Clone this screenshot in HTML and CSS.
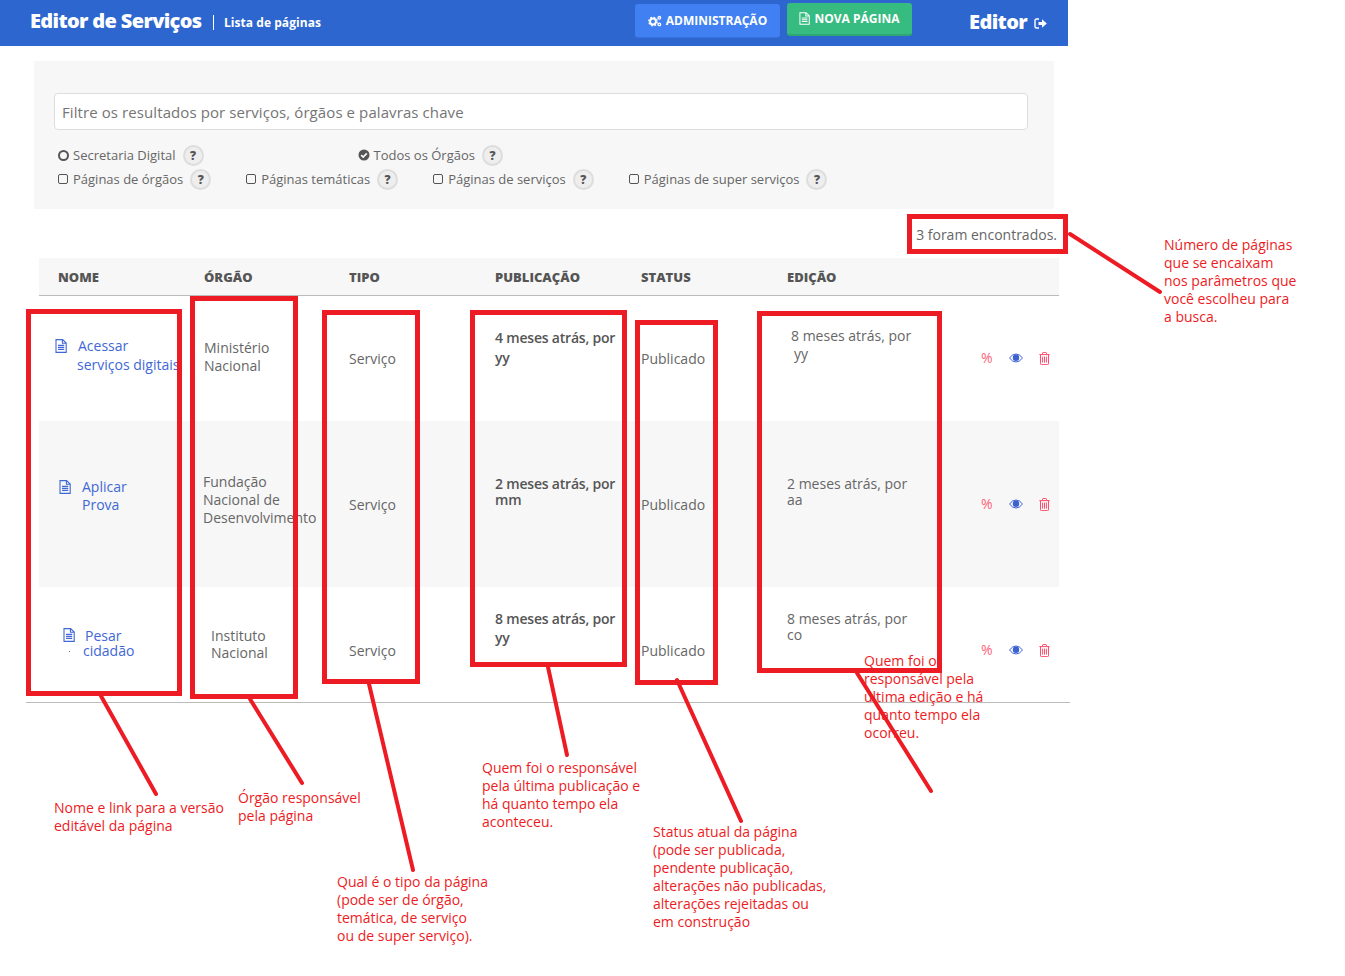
FILE: index.html
```html
<!DOCTYPE html>
<html lang="pt-BR">
<head>
<meta charset="utf-8">
<title>Editor de Serviços</title>
<link rel="stylesheet" href="styles.css">
</head>
<body>
<svg width="0" height="0" class="defs">
  <symbol id="doc" viewBox="0 0 12 14"><path d="M1 .6h6.6L11.2 4v9.4H1z M7.4.8V4.2h3.6 M3 6.4h6.2 M3 8.4h6.2 M3 10.4h6.2" fill="none" stroke="currentColor" stroke-width="1.1"/></symbol>
  <symbol id="trash" viewBox="0 0 11 13"><path d="M.3 2.6h10.4 M1.5 2.6v9.2q0 .8.8.8h6.4q.8 0 .8-.8V2.6 M3.5 2.6V1.2q0-.7.7-.7h2.6q.7 0 .7.7v1.4 M3.6 4.6v6 M5.5 4.6v6 M7.4 4.6v6" fill="none" stroke="currentColor" stroke-width="1"/></symbol>
  <symbol id="eye" viewBox="0 0 14 10"><path d="M.5 5Q3.4 1 7 1t6.500 4Q10.600 9 7 9T.5 5z" fill="none" stroke="currentColor" stroke-width="1"/><circle cx="7" cy="4.800" r="3.200" fill="currentColor"/></symbol>
</svg>

<header class="topbar">
  <h1 class="brand">Editor de Serviços</h1>
  <span class="sub">Lista de páginas</span>
  <a class="btn btn-admin">
    <svg class="ico-gear" viewBox="0 0 14 12"><circle cx="5" cy="6.500" r="2.900" fill="none" stroke="#fff" stroke-width="2"/><circle cx="5" cy="6.500" r="4.300" fill="none" stroke="#fff" stroke-width="1.200" stroke-dasharray="1.800 1.570"/><circle cx="11.300" cy="2.800" r="1.300" fill="none" stroke="#fff" stroke-width="1.300"/><circle cx="11.300" cy="9.400" r="1.300" fill="none" stroke="#fff" stroke-width="1.300"/></svg>
    ADMINISTRAÇÃO
  </a>
  <a class="btn btn-new">
    <svg class="ico-doc"><use href="#doc"/></svg>
    NOVA PÁGINA
  </a>
  <span class="user">Editor</span>
  <svg class="ico-out" viewBox="0 0 13 11"><path d="M5 1H2.500Q1 1 1 2.500v6Q1 10 2.500 10H5" fill="none" stroke="#fff" stroke-width="1.400"/><path d="M4.500 4h3.500V1.200L12.800 5.500 8 9.800V7H4.500z" fill="#fff"/></svg>
</header>

<main class="page">
  <section class="panel">
    <input class="search" type="text" placeholder="Filtre os resultados por serviços, órgãos e palavras chave">
    <div class="opts">
      <span class="opt"><i class="radio"></i>Secretaria Digital<b class="q">?</b></span>
      <span class="opt opt-all"><svg class="check" viewBox="0 0 12 12"><circle cx="6" cy="6" r="5.500" fill="#555"/><path d="M3.200 6.100l2 2 3.600-3.800" fill="none" stroke="#f7f7f7" stroke-width="1.700"/></svg>Todos os Órgãos<b class="q">?</b></span>
    </div>
    <div class="opts">
      <span class="opt"><i class="box"></i>Páginas de órgãos<b class="q">?</b></span>
      <span class="opt"><i class="box"></i>Páginas temáticas<b class="q">?</b></span>
      <span class="opt"><i class="box"></i>Páginas de serviços<b class="q">?</b></span>
      <span class="opt"><i class="box"></i>Páginas de super serviços<b class="q">?</b></span>
    </div>
  </section>

  <p class="found">3 foram encontrados.</p>

  <div class="table">
    <div class="row head">
      <div>NOME</div><div>ÓRGÃO</div><div>TIPO</div><div>PUBLICAÇÃO</div><div>STATUS</div><div>EDIÇÃO</div><div></div>
    </div>

    <div class="row r1">
      <div class="cell name"><svg class="ico-file"><use href="#doc"/></svg><a>Acessar<br><span class="name2">serviços digitais</span></a></div>
      <div class="cell org">Ministério<br>Nacional</div>
      <div class="cell type">Serviço</div>
      <div class="cell pub">4 meses atrás, por<br>yy</div>
      <div class="cell stat">Publicado</div>
      <div class="cell edit">8 meses atrás, por<br><span class="edit2">yy</span></div>
      <div class="cell acts"><span class="pct">%</span><svg class="ico-eye"><use href="#eye"/></svg><svg class="ico-trash"><use href="#trash"/></svg></div>
    </div>

    <div class="row r2">
      <div class="cell name"><svg class="ico-file"><use href="#doc"/></svg><a>Aplicar<br>Prova</a></div>
      <div class="cell org">Fundação<br>Nacional de<br>Desenvolvimento</div>
      <div class="cell type">Serviço</div>
      <div class="cell pub">2 meses atrás, por<br>mm</div>
      <div class="cell stat">Publicado</div>
      <div class="cell edit">2 meses atrás, por<br>aa</div>
      <div class="cell acts"><span class="pct">%</span><svg class="ico-eye"><use href="#eye"/></svg><svg class="ico-trash"><use href="#trash"/></svg></div>
    </div>

    <div class="row r3">
      <div class="cell name"><svg class="ico-file"><use href="#doc"/></svg><a>Pesar<br><span class="name2">cidadão</span></a></div>
      <div class="cell org">Instituto<br>Nacional</div>
      <div class="cell type">Serviço</div>
      <div class="cell pub">8 meses atrás, por<br>yy</div>
      <div class="cell stat">Publicado</div>
      <div class="cell edit">8 meses atrás, por<br>co</div>
      <div class="cell acts"><span class="pct">%</span><svg class="ico-eye"><use href="#eye"/></svg><svg class="ico-trash"><use href="#trash"/></svg></div>
    </div>
  </div>
  <hr class="rule">
</main>

<div class="note n-found">Número de páginas<br>que se encaixam<br>nos parâmetros que<br>você escolheu para<br>a busca.</div>
<div class="note n-name">Nome e link para a versão<br>editável da página</div>
<div class="note n-org">Órgão responsável<br>pela página</div>
<div class="note n-type">Qual é o tipo da página<br>(pode ser de órgão,<br>temática, de serviço<br>ou de super serviço).</div>
<div class="note n-pub">Quem foi o responsável<br>pela última publicação e<br>há quanto tempo ela<br>aconteceu.</div>
<div class="note n-stat">Status atual da página<br>(pode ser publicada,<br>pendente publicação,<br>alterações não publicadas,<br>alterações rejeitadas ou<br>em construção</div>
<div class="note n-edit">Quem foi o<br>responsável pela<br>última edição e há<br>quanto tempo ela<br>ocorreu.</div>

<svg class="marks" viewBox="0 0 1345 976">
  <rect class="speck" x="69" y="651" width="1" height="1"/>
  <g class="boxes">
    <rect x="909.500" y="216.500" width="156" height="35"/>
    <rect x="28.500" y="311.500" width="151" height="382"/>
    <rect x="192.500" y="298.500" width="103" height="398"/>
    <rect x="324.500" y="312.500" width="93" height="369"/>
    <rect x="472.500" y="312.500" width="152" height="352"/>
    <rect x="637.500" y="322.500" width="78" height="360"/>
    <rect x="759.500" y="313.500" width="180" height="357"/>
  </g>
  <g class="lines">
    <line x1="1070" y1="234" x2="1160" y2="292"/>
    <line x1="101" y1="696" x2="156" y2="794"/>
    <line x1="250" y1="699" x2="302" y2="783"/>
    <line x1="369" y1="684" x2="413" y2="870"/>
    <line x1="548" y1="667" x2="567" y2="755"/>
    <line x1="677" y1="680" x2="741" y2="821"/>
    <line x1="857" y1="673" x2="931" y2="791"/>
  </g>
</svg>
</body>
</html>
```

FILE: styles.css
```css
* { box-sizing: border-box; }
html, body { margin: 0; padding: 0; }
body {
  position: relative;
  width: 1345px;
  height: 976px;
  overflow: hidden;
  background: #fff;
  color: #666;
  font-family: "Open Sans", "Liberation Sans", sans-serif;
  font-size: 14px;
}
.defs { position: absolute; }

/* top bar */
.topbar {
  width: 1068px;
  height: 46px;
  background: #2d66cf;
  color: #fff;
  display: flex;
  align-items: center;
  padding-left: 30px;
}
.brand {
  margin: -4px 0 0;
  font-size: 20px;
  font-weight: 800;
  letter-spacing: -.65px;
  line-height: 42px;
  width: 183px;
  white-space: nowrap;
}
.sub {
  border-left: 1px solid #fff;
  padding-left: 10px;
  font-size: 12px;
  font-weight: 700;
  letter-spacing: .05px;
  line-height: 15px;
  width: 422px;
  margin-top: -1px;
}
.btn {
  display: flex;
  align-items: center;
  justify-content: center;
  font-size: 12px;
  font-weight: 700;
  border-radius: 3px;
  height: 33px;
}
.btn-admin {
  width: 145px;
  background: #4080f2;
  box-shadow: 0 1px 0 #3a72dc;
  gap: 4px;
  margin-top: -5px;
  margin-right: 7px;
}
.btn-new {
  width: 125px;
  background: #36bb80;
  border-bottom: 2px solid #2fa673;
  gap: 4px;
  margin-top: -7px;
}
.ico-gear { width: 14px; height: 12px; }
.ico-doc { width: 11px; height: 13px; color: #fff; }
.user {
  margin-left: 57px;
  width: 65px;
  font-size: 20px;
  font-weight: 800;
  letter-spacing: -.6px;
  margin-top: -4px;
}
.ico-out { width: 13px; height: 11px; margin-top: 1px; }

/* filter panel */
.page { width: 1070px; }
.panel {
  margin: 15px 0 0 34px;
  width: 1020px;
  height: 148px;
  background: #f7f7f7;
  padding: 32px 26px 0 20px;
}
.search {
  display: block;
  width: 974px;
  height: 37px;
  border: 1px solid #ddd;
  border-radius: 4px;
  padding: 0 7px;
  margin-bottom: 13px;
  background: #fff;
  font: 15px "Open Sans", sans-serif;
  letter-spacing: .09px;
  color: #666;
}
.search::placeholder { color: #757575; opacity: 1; }
.opts {
  display: flex;
  gap: 35px;
  height: 24px;
  padding-left: 4px;
  align-items: center;
  font-size: 13px;
}
.opt { display: flex; align-items: center; white-space: nowrap; }
.opt-all { margin-left: 119px; }
.radio {
  width: 11px;
  height: 11px;
  border: 2px solid #555;
  border-radius: 50%;
  margin-right: 4px;
}
.box {
  width: 10px;
  height: 10px;
  border: 1px solid #555;
  border-radius: 2px;
  margin-right: 5px;
}
.check { width: 12px; height: 12px; margin-right: 4px; }
.q {
  width: 21px;
  height: 21px;
  margin-left: 7px;
  border-radius: 50%;
  background: #eee;
  border: 2px solid #ddd;
  color: #555;
  font-size: 12px;
  font-weight: 800;
  line-height: 17px;
  text-align: center;
}

/* results line */
.found {
  margin: 15px 0 0;
  width: 1057px;
  height: 34px;
  text-align: right;
  line-height: 22px;
}

/* table */
.table { margin-left: 39px; width: 1020px; }
.row {
  display: grid;
  grid-template-columns: 146px 145px 146px 146px 146px 146px 145px;
  line-height: 18px;
}
.row > div { padding-left: 19px; }
.head {
  height: 38px;
  background: #f7f7f7;
  border-bottom: 1px solid #bbb;
  font-size: 13px;
  font-weight: 800;
  color: #555;
  line-height: 38px;
}
.r1 { height: 125px; }
.r2 { height: 166px; background: #f7f7f7; }
.r3 { height: 115px; }
.cell { white-space: nowrap; }
.name { display: flex; align-items: flex-start; color: #3f68d6; }
.name a { color: #3f68d6; display: block; }
.ico-file { width: 12px; height: 14px; flex: none; }
.pub { font-weight: 600; color: #555; letter-spacing: -.2px; }
.row > .acts { display: flex; align-items: center; height: 18px; padding-left: 67px; }
.pct { color: #ff6478; width: 28px; font-size: 14px; }
.ico-eye { width: 14px; height: 10px; color: #3b62d0; margin-right: 16px; }
.ico-trash { width: 11px; height: 13px; color: #ff4d6d; }
.speck { fill: #777; }

.r1 .name { padding: 40px 0 0 16px; gap: 11px; line-height: 19px; }
.r1 .ico-file { margin-top: 3px; }
.r1 .name2 { margin-left: -1px; }
.r1 .org { padding-top: 43px; }
.r1 .type, .r1 .stat { padding-top: 54px; }
.r1 .pub { padding-top: 32px; line-height: 20px; }
.r1 .edit { padding: 31px 0 0 23px; }
.r1 .edit2 { margin-left: 3px; }
.r1 .acts { margin-top: 53px; }

.r2 .name { padding: 57px 0 0 20px; gap: 11px; }
.r2 .ico-file { margin-top: 2px; }
.r2 .org { padding: 52px 0 0 18px; }
.r2 .type, .r2 .stat { padding-top: 75px; }
.r2 .pub { padding-top: 55px; line-height: 16px; }
.r2 .edit { padding-top: 55px; line-height: 16px; }
.r2 .acts { margin-top: 74px; }

.r3 .name { padding: 41px 0 0 24px; gap: 10px; line-height: 15px; }
.r3 .name2 { margin-left: -2px; }
.r3 .org { padding: 40px 0 0 26px; line-height: 17px; }
.r3 .type, .r3 .stat { padding-top: 55px; }
.r3 .pub { padding-top: 22px; line-height: 19px; }
.r3 .edit { padding-top: 24px; line-height: 16px; }
.r3 .acts { margin-top: 54px; }

.rule {
  margin: 0 0 0 26px;
  width: 1044px;
  border: 0;
  border-top: 1px solid #bbb;
}

/* annotation layer: placed freely over the screenshot */
.note {
  position: absolute;
  color: #ed1c24;
  font-size: 14px;
  line-height: 18px;
  white-space: nowrap;
}
.n-found { left: 1164px; top: 236px; }
.n-name { left: 54px; top: 799px; }
.n-org { left: 238px; top: 789px; }
.n-type { left: 337px; top: 873px; }
.n-pub { left: 482px; top: 759px; }
.n-stat { left: 653px; top: 823px; }
.n-edit { left: 864px; top: 652px; }

.marks {
  position: absolute;
  left: 0;
  top: 0;
  width: 1345px;
  height: 976px;
  pointer-events: none;
}
.boxes rect { fill: none; stroke: #ed1c24; stroke-width: 5; }
.lines line { stroke: #ed1c24; stroke-width: 4; stroke-linecap: round; }
```
